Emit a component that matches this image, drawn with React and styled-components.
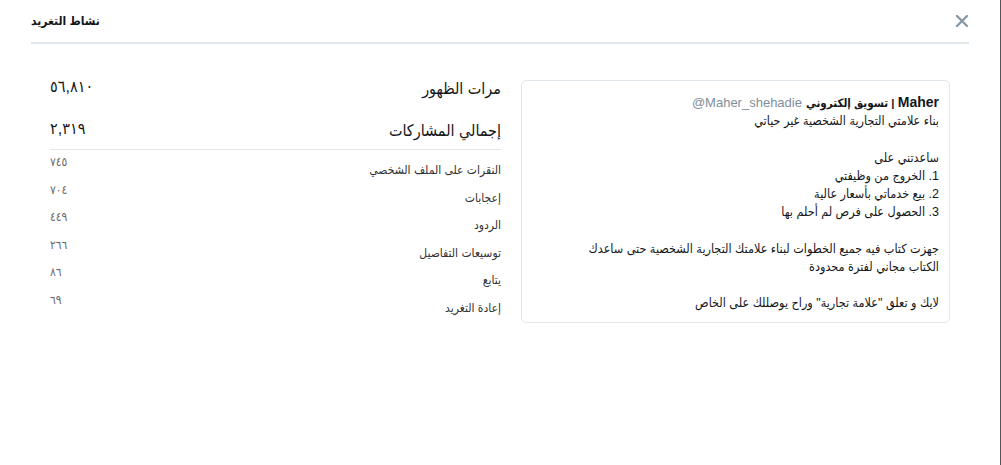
import React from "react";
import styled, { createGlobalStyle } from "styled-components";

const Global = createGlobalStyle`
  html, body {
    margin: 0;
    padding: 0;
    background: #ffffff;
  }
  body {
    font-family: "Liberation Sans", "DejaVu Sans Condensed", "DejaVu Sans", Arial, sans-serif;
    color: #14171a;
  }
`;

const Page = styled.div`
  width: 1000px;
  height: 465px;
  border-right: 1px solid #50565a;
  background: #fff;
  overflow: hidden;
`;

const Header = styled.div`
  margin: 0 31px;
  height: 42px;
  border-bottom: 2px solid #e1e8ed;
  display: flex;
  align-items: center;
  justify-content: space-between;
`;

const Title = styled.h3`
  margin: 0;
  font-size: 12px;
  font-weight: bold;
  color: #14171a;
`;

const Close = styled.button`
  border: 0;
  background: none;
  padding: 0;
  margin-right: -1px;
  width: 16px;
  height: 16px;
  display: flex;
  align-items: center;
  justify-content: center;
  cursor: pointer;
`;

const Body = styled.div`
  display: flex;
  align-items: flex-start;
  gap: 20px;
  padding: 36px 50px 0 50px;
`;

const Card = styled.div`
  width: 429px;
  box-sizing: border-box;
  border: 1px solid #e1e8ed;
  border-radius: 5px;
  padding: 12px 10px 10px 12px;
  font-size: 12.5px;
  line-height: 18.2px;
  color: #14171a;
`;

const TweetHead = styled.div`
  font-size: 11.5px;
`;

const Name = styled.span`
  font-weight: bold;
`;

const Latin = styled.bdi`
  font-size: 14px;
`;

const Handle = styled.span`
  color: #7f8e9b;
  font-size: 13px;
  margin-right: 4px;
`;

const Line = styled.div`
  min-height: 18.2px;
  white-space: pre-wrap;
`;

const Stats = styled.div`
  flex: 1;
  margin-top: -2px;
`;

const MainRow = styled.div`
  display: flex;
  justify-content: space-between;
  align-items: flex-start;
  height: 22px;
  margin-bottom: ${(p) => (p.$last ? "7px" : "20px")};
`;

const MainLabel = styled.span`
  font-size: 16px;
  line-height: 22px;
  color: #14171a;
`;

const MainValue = styled.span`
  font-size: 16px;
  line-height: 18px;
  letter-spacing: 1px;
  color: #14171a;
`;

const Divider = styled.div`
  border-top: 1px solid #e1e8ed;
  padding-top: 5px;
`;

const Row = styled.div`
  display: flex;
  justify-content: space-between;
  align-items: flex-start;
  height: 27.6px;
`;

const RowLabel = styled.span`
  font-size: 12px;
  line-height: 16px;
  margin-top: 7px;
  color: #333;
`;

const RowValue = styled.span`
  font-size: 12px;
  line-height: 14px;
  letter-spacing: 1.5px;
  color: #6a6a6a;
`;

const details = [
  ["النقرات على الملف الشخصي", "٧٤٥"],
  ["إعجابات", "٧٠٤"],
  ["الردود", "٤٤٩"],
  ["توسيعات التفاصيل", "٢٦٦"],
  ["يتابع", "٨٦"],
  ["إعادة التغريد", "٦٩"],
];

const tweet = [
  "بناء علامتي التجارية الشخصية غير حياتي",
  "",
  "ساعدتني على",
  "1. الخروج من وظيفتي",
  "2. بيع خدماتي بأسعار عالية",
  "3. الحصول على فرص لم أحلم بها",
  "",
  "جهزت كتاب فيه جميع الخطوات لبناء علامتك التجارية الشخصية حتى ساعدك",
  "الكتاب مجاني لفترة محدودة",
  "",
  "لايك و تعلق \"علامة تجارية\" وراح يوصللك على الخاص",
];

export default function App() {
  return (
    <Page dir="rtl">
      <Global />
      <Header>
        <Close aria-label="إغلاق">
          <svg width="14" height="14" viewBox="0 0 14 14">
            <path d="M2 2 L12 12 M12 2 L2 12" stroke="#8899a6" strokeWidth="2.4" strokeLinecap="round" />
          </svg>
        </Close>
        <Title>نشاط التغريد</Title>
      </Header>
      <Body>
        <Card>
          <TweetHead>
            <Name>
              <Latin dir="ltr">Maher</Latin> | تسويق إلكتروني
            </Name>
            <Handle>
              <bdi dir="ltr">@Maher_shehadie</bdi>
            </Handle>
          </TweetHead>
          {tweet.map((t, i) => (
            <Line key={i}>{t}</Line>
          ))}
        </Card>
        <Stats>
          <MainRow>
            <MainLabel>مرات الظهور</MainLabel>
            <MainValue>٥٦,٨١٠</MainValue>
          </MainRow>
          <MainRow $last>
            <MainLabel>إجمالي المشاركات</MainLabel>
            <MainValue>٢,٣١٩</MainValue>
          </MainRow>
          <Divider>
            {details.map(([l, v]) => (
              <Row key={l}>
                <RowLabel>{l}</RowLabel>
                <RowValue>{v}</RowValue>
              </Row>
            ))}
          </Divider>
        </Stats>
      </Body>
    </Page>
  );
}
